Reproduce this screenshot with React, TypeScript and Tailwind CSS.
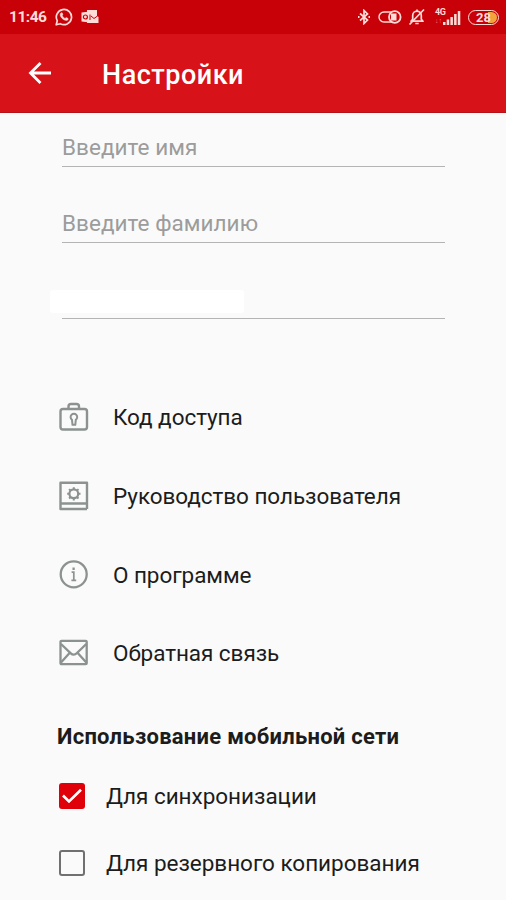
import React from 'react';

interface IconProps {
  className?: string;
}

const WhatsAppIcon: React.FC<IconProps> = ({ className }) => (
  <svg className={className} viewBox="0 0 18 18" fill="none" stroke="currentColor">
    <path d="M1.2 16.8l1.1-4A7.6 7.6 0 1 1 5.2 15.7z" strokeWidth="1.7" strokeLinejoin="round" />
    <path
      d="M6.2 4.8c.5-.3 1-.2 1.2.3l.5 1.3c.1.4-.5 1-.6 1.3.5 1.2 1.5 2.1 2.8 2.7.4-.1.9-.9 1.3-.8l1.5.7c.5.3.3 1.3-.1 1.700-2.400 2-7.900-2.200-7.700-5.500.1-.7.5-1.300 1.100-1.700z"
      fill="currentColor"
      strokeWidth="0.4"
    />
  </svg>
);

const OutlookIcon: React.FC<IconProps> = ({ className }) => (
  <svg className={className} viewBox="0 0 18 16">
    <path d="M6 1h10v6l1.500 1v6H6z" fill="currentColor" />
    <path d="M0.500 3.500L9 2.500v11L.500 12.500z" fill="currentColor" />
    <circle cx="4.400" cy="8" r="2" fill="none" stroke="#c80007" strokeWidth="1.200" />
    <path d="M9 5.500v5.500M10 7l3 2.500 3.500-2.500" fill="none" stroke="#c80007" strokeWidth="1" />
  </svg>
);

const BluetoothIcon: React.FC<IconProps> = ({ className }) => (
  <svg className={className} viewBox="0 0 14 16" fill="none" stroke="currentColor" strokeWidth="1.700">
    <path d="M3 4.500l7.500 6.500L7 14.500v-13L10.500 5 3 11.500" />
    <path d="M1 8h1.500M11.500 8H13" strokeWidth="1.800" />
  </svg>
);

const ToggleIcon: React.FC<IconProps> = ({ className }) => (
  <svg className={className} viewBox="0 0 24 16" fill="none" stroke="currentColor">
    <path d="M14 3H6a5 5 0 0 0 0 10h8" strokeWidth="1.400" />
    <circle cx="16.800" cy="8" r="5.800" strokeWidth="1.800" />
    <rect x="13" y="4.500" width="5.500" height="7" fill="currentColor" stroke="none" />
  </svg>
);

const BellOffIcon: React.FC<IconProps> = ({ className }) => (
  <svg className={className} viewBox="0 0 18 18" fill="none" stroke="currentColor" strokeWidth="1.700">
    <path d="M3 13.200h12l-1.700-2V7.500a4.300 4.300 0 0 0-8.600 0v3.700zM9 3.200V1.500" strokeLinejoin="round" />
    <path d="M7.300 15.500h3.400M1.500 16.500L16 1.500" />
  </svg>
);

const SignalIcon: React.FC<IconProps> = ({ className }) => (
  <svg className={className} viewBox="0 0 18 14" fill="currentColor">
    <path d="M0 11h2.500v3H0zM3.700 8.500h2.500V14H3.700zM7.400 6h2.500v8H7.400zM11.100 3h2.500v11h-2.500zM14.800 0h2.500v14h-2.500z" />
  </svg>
);

const BackIcon: React.FC<IconProps> = ({ className }) => (
  <svg className={className} viewBox="0 0 24 24" fill="none" stroke="currentColor" strokeWidth="2.800">
    <path d="M23 12H3M12.500 2L2.500 12l10 10" />
  </svg>
);

const LockCaseIcon: React.FC<IconProps> = ({ className }) => (
  <svg className={className} viewBox="0 0 30 30" fill="none" stroke="currentColor" strokeWidth="2.400">
    <rect x="1.500" y="7" width="26.500" height="20.500" rx="2.500" />
    <path d="M9.500 7V4.500a2.500 2.500 0 0 1 2.500-2.500h5.500a2.500 2.500 0 0 1 2.500 2.500V7" />
    <path d="M13.500 22.800l-.5-5a3.300 3.300 0 1 1 3.800 0l-.5 5z" strokeWidth="2" strokeLinejoin="round" />
  </svg>
);

const ManualIcon: React.FC<IconProps> = ({ className }) => (
  <svg className={className} viewBox="0 0 30 30" fill="none" stroke="currentColor" strokeWidth="2.400">
    <path d="M28 22.500V1.700H1.500v26.300H28M1.500 22.500H28V28" strokeLinejoin="round" />
    <circle cx="14.800" cy="12.800" r="4.400" strokeWidth="2.200" />
    <path
      d="M14.800 6.200v2.500M14.800 17v2.500M8.200 12.800h2.500M19 12.800h2.500M10.100 8.100l1.800 1.800M17.700 15.700l1.800 1.800M10.100 17.500l1.800-1.800M17.700 9.900l1.800-1.800"
      strokeWidth="2"
    />
  </svg>
);

const InfoIcon: React.FC<IconProps> = ({ className }) => (
  <svg className={className} viewBox="0 0 30 30" fill="none" stroke="currentColor" strokeWidth="2.300">
    <circle cx="14.700" cy="14.300" r="13" />
    <path d="M12.600 12.200h2.200v8M12.400 20.400h4.800" strokeWidth="1.700" />
    <path d="M14.600 7.500v2.500" />
  </svg>
);

const MailIcon: React.FC<IconProps> = ({ className }) => (
  <svg className={className} viewBox="0 0 30 30" fill="none" stroke="currentColor" strokeWidth="2.300" strokeLinejoin="round">
    <rect x="1.500" y="2.800" width="26.200" height="23.400" rx="1" />
    <path d="M2 6l9.800 9.300a4.200 4.200 0 0 0 5.900 0L27.300 6M2 24.500l8.800-9.800M27.300 24.500l-8.800-9.800" />
  </svg>
);

const menuItems = [
  { label: 'Код доступа', icon: LockCaseIcon },
  { label: 'Руководство пользователя', icon: ManualIcon },
  { label: 'О программе', icon: InfoIcon },
  { label: 'Обратная связь', icon: MailIcon },
];

const networkOptions = [
  { label: 'Для синхронизации', checked: true },
  { label: 'Для резервного копирования', checked: false },
];

const StatusBar: React.FC = () => (
  <div className="flex h-[34px] items-center justify-between bg-[#c80007] pl-[9px] pr-[7px] text-[#ffdcd8]">
    <div className="flex items-center">
      <span className="mt-[2px] w-[46px] text-[15.5px] font-bold leading-none tracking-[-0.5px]">11:46</span>
      <WhatsAppIcon className="h-[18px] w-[18px]" />
      <OutlookIcon className="ml-[8px] h-[16px] w-[18px]" />
    </div>
    <div className="flex items-center">
      <BluetoothIcon className="h-[16px] w-[14px]" />
      <ToggleIcon className="ml-[7px] h-[16px] w-[24px]" />
      <BellOffIcon className="ml-[6px] h-[18px] w-[18px]" />
      <div className="ml-[9px] flex items-end pb-[2px]">
        <div className="flex h-[17px] w-[8px] flex-col justify-between">
          <span className="text-[9px] font-bold leading-[9px] tracking-[-0.5px]">4G</span>
          <span className="text-[7px] leading-[8px] text-[#ff6f6f]">↓↑</span>
        </div>
        <SignalIcon className="h-[14px] w-[18px]" />
      </div>
      <div className="ml-[7px] flex h-[15px] w-[31px] items-center rounded-full border-[1.5px] border-[#ffdcd8] p-px">
        <div className="flex h-full w-full items-center justify-center rounded-full bg-linear-to-r from-[#c80007] from-65% to-[#f2a33c] to-65% text-[13px] font-bold leading-none">
          28
        </div>
      </div>
    </div>
  </div>
);

export default function App() {
  return (
    <div className="h-[900px] w-[506px] overflow-hidden bg-[#fafafa] font-['Roboto','Noto_Sans',sans-serif] text-[#1c1c1c]">
      <StatusBar />

      <header className="flex h-[79px] items-center border-b border-[#b5121a] bg-[#d71218] pl-[28px] text-white">
        <BackIcon className="h-[24px] w-[24px]" />
        <h1 className="ml-[50px] mt-[5px] text-[27px] font-medium leading-none tracking-[0.5px]">Настройки</h1>
      </header>

      {/* Profile fields */}
      <div className="pl-[62px] pr-[61px] text-[22.5px] leading-[26px] tracking-[0.04px] text-[#9c9c9c]">
        <div className="flex h-[54px] items-end border-b border-[#b4b4b4] pb-[6px]">Введите имя</div>
        <div className="flex h-[76px] items-end border-b border-[#b4b4b4] pb-[6px]">Введите фамилию</div>
        <div className="flex h-[76px] items-end border-b border-[#b4b4b4] pb-[5px]">
          <div className="ml-[-12px] h-[23px] w-[194px] rounded-[3px] bg-white"></div>
        </div>
      </div>

      <nav className="mt-[59px]">
        {menuItems.map(({ label, icon: Icon }) => (
          <div key={label} className="flex h-[78.7px] items-center pl-[59px]">
            <Icon className="h-[30px] w-[30px] text-[#8b9290]" />
            <span className="ml-[24px] text-[22.5px] leading-[26px] tracking-[-0.06px]">{label}</span>
          </div>
        ))}
      </nav>

      <section className="mt-[31px]">
        <h2 className="ml-[57px] text-[22px] font-bold leading-[26px] tracking-[0.26px]">Использование мобильной сети</h2>
        <div className="mt-[12px]">
          {networkOptions.map((option) => (
            <div key={option.label} className="flex h-[67.5px] items-center pl-[59px]">
              {option.checked ? (
                <div className="flex h-[26px] w-[26px] items-center justify-center rounded-[3px] bg-[#df0009]">
                  <svg className="h-[20px] w-[20px]" viewBox="0 0 20 20" fill="none" stroke="#fff" strokeWidth="2.600">
                    <path d="M1 9.500l6 6L19 3.800" />
                  </svg>
                </div>
              ) : (
                <div className="h-[26px] w-[26px] rounded-[3px] border-2 border-[#707070]"></div>
              )}
              <span className="ml-[21px] text-[22.5px] leading-[26px] tracking-[-0.03px]">{option.label}</span>
            </div>
          ))}
        </div>
      </section>
    </div>
  );
}
